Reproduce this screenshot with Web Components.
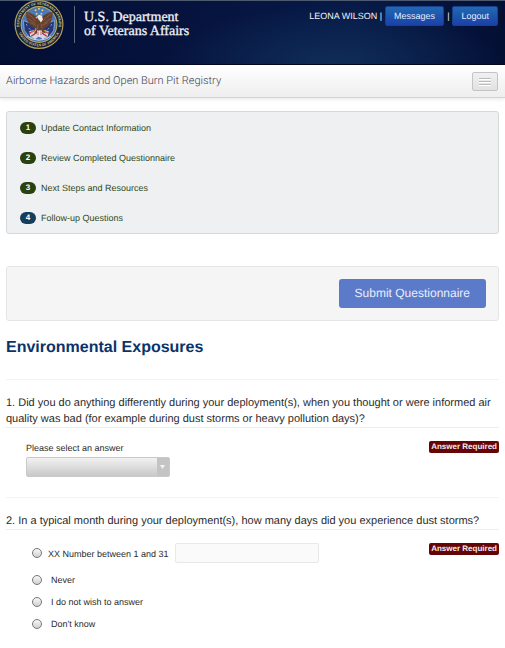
<!DOCTYPE html>
<html lang="en">
<head>
<meta charset="utf-8">
<meta name="viewport" content="width=device-width, initial-scale=1">
<title>Airborne Hazards and Open Burn Pit Registry</title>
<style>
  body {
    margin: 0;
    background: #fff;
    color: #2b2b2b;
    font: 10px/16px "Liberation Sans", Arial, sans-serif;
    text-rendering: geometricPrecision;
    --gutter: 6px;
    --line: #eeeeee;
  }
  main {
    padding: 0 var(--gutter);
  }
  h1 {
    margin: 16px 0 20px;
    color: #0a3469;
    font-size: 16px;
    line-height: 22px;
  }
</style>
</head>
<body>
<va-header user="LEONA WILSON"></va-header>
<va-navbar>Airborne Hazards and Open Burn Pit Registry</va-navbar>
<main>
  <step-list>
    <step-item number="1">Update Contact Information</step-item>
    <step-item number="2">Review Completed Questionnaire</step-item>
    <step-item number="3">Next Steps and Resources</step-item>
    <step-item number="4" current>Follow-up Questions</step-item>
  </step-list>
  <submit-bar>Submit Questionnaire</submit-bar>
  <h1>Environmental Exposures</h1>
  <survey-question>
    <span slot="title">1. Did you do anything differently during your deployment(s), when you thought or were informed air quality was bad (for example during dust storms or heavy pollution days)?</span>
    <answer-select>Please select an answer</answer-select>
  </survey-question>
  <survey-question>
    <span slot="title">2. In a typical month during your deployment(s), how many days did you experience dust storms?</span>
    <answer-options></answer-options>
  </survey-question>
</main>

<script>
class VaSeal extends HTMLElement {
  constructor() {
    super();
    this.attachShadow({ mode: 'open' });
    this.shadowRoot.innerHTML = `
      <style>
        :host { display: block; height: 49px; }
        svg { display: block; }
      </style>
      <svg width="50" height="49" viewBox="0 0 50 50" role="img" aria-label="Seal">
        <defs>
          <path id="upper" d="M5.4 30 A20.200 20.200 0 1 1 44.6 30"/>
          <path id="lower" d="M4.4 33 A22 22 0 0 0 45.6 33"/>
        </defs>
        <circle cx="25" cy="25" r="25" fill="#b3a05b"/>
        <circle cx="25" cy="25" r="23.8" fill="#17223b"/>
        <g fill="#d6c987" font-family="Liberation Sans, sans-serif" font-size="4" font-weight="bold">
          <text font-size="3.6"><textPath href="#upper" startOffset="50%" text-anchor="middle">DEPARTMENT OF VETERANS AFFAIRS</textPath></text>
          <text font-size="3.6"><textPath href="#lower" startOffset="50%" text-anchor="middle">UNITED STATES OF AMERICA</textPath></text>
        </g>
        <circle cx="25" cy="25" r="18.8" fill="#c4ad5c"/>
        <circle cx="25" cy="25" r="17.8" fill="#4a78b8"/>
        <!-- stars -->
        <g fill="#e6d35a">
          <circle cx="25" cy="9" r="1"/><circle cx="21.5" cy="10.4" r="1"/><circle cx="28.5" cy="10.4" r="1"/>
          <circle cx="22.6" cy="14" r="1"/><circle cx="27.4" cy="14" r="1"/>
        </g>
        <!-- flags -->
        <path d="M9 21l11 4 4 10-8 4-6-8z" fill="#243a78" stroke="#a9bddd" stroke-width=".7"/>
        <path d="M41 21l-11 4-4 10 8 4 6-8z" fill="#243a78" stroke="#a9bddd" stroke-width=".7"/>
        <path d="M15 32l7-2 3 7-4 3-5-3zM35 32l-7-2-3 7 4 3 5-3z" fill="#d9d5df"/>
        <path d="M15 34l6-3M17 37l6-4M35 34l-6-3M33 37l-6-4" stroke="#b63442" stroke-width="1.4"/>
        <path d="M12 25l1 1M15 29l1 1M38 25l-1 1M35 29l-1 1" stroke="#dce4f4"/>
        <!-- eagle -->
        <path d="M25 21c-2-4-7-8-13-9-1 7 2 13 8 16l3 1-3 5 4-1 2 3 2-3 4 1-2-5c6-2 9-9 9-17-6 1-11 4-14 9z" fill="#66402e"/>
        <path d="M13 14c4 2 6 4 8 8M14 19l7 5M16 23l6 3M38 14c-4 2-6 4-9 8M37 19l-7 5M34 23l-6 3M24 25l-1 5M27 24l1 5" fill="none" stroke="#8f6243" stroke-width=".8"/>
        <path d="M23 17l2-2 3 1 1 4-2 3-3-4z" fill="#eee9df"/>
        <path d="M23 17l-2 1 2 1z" fill="#deb844"/>
        <path d="M20 31l-3 3M30 31l4 2" stroke="#d2ae4f"/>
        <path d="M23 31h5v4l-3 3-2-3z" fill="#ece8e9"/>
        <path d="M24 32v4M27 32v4" stroke="#a93442" stroke-width=".8"/>
        <path d="M13 37q12 8 24 0" fill="none" stroke="#d2dced"/>
      </svg>
    `;
  }
}
customElements.define('va-seal', VaSeal);

class VaHeader extends HTMLElement {
  constructor() {
    super();
    this.attachShadow({ mode: 'open' });
    this.shadowRoot.innerHTML = `
      <style>
        :host { display: block; }
        header {
          display: flex;
          align-items: flex-start;
          justify-content: space-between;
          box-sizing: border-box;
          min-height: 65px;
          padding: 0 7px 0 14px;
          color: #f0f2f7;
          background:
            linear-gradient(#4c596e, #4c596e) top / 100% 1px no-repeat,
            radial-gradient(ellipse 170px 60px at 66% 100%, #0f2d57, transparent),
            linear-gradient(90deg, #030e33, #061440 45%, #071a48 70%, #040f34);
          border-bottom: 1px solid #020a26;
        }
        .brand { display: flex; }
        .name {
          box-sizing: border-box;
          height: 37px;
          margin: 6px 0 0 10px;
          padding: 5px 0 0 9px;
          border-left: 1px solid #5f6980;
          font: 14px/14px "Liberation Serif", serif;
          -webkit-text-stroke: 0.3px;
        }
        nav {
          display: flex;
          align-items: center;
          gap: 3px;
          padding-top: 6px;
          font-size: 9px;
        }
        button {
          height: 20px;
          padding: 0 8px;
          color: #e3edfa;
          font: inherit;
          line-height: 18px;
          text-rendering: inherit;
          background: linear-gradient(#2169b1, #1a41a9);
          border: 1px solid #17418d;
          border-radius: 2px;
        }
      </style>
      <header>
        <div class="brand">
          <va-seal></va-seal>
          <div class="name">U.S. Department<br>of Veterans Affairs</div>
        </div>
        <nav>
          <span><span class="user"></span> |</span>
          <button type="button">Messages</button>
          <span>|</span>
          <button type="button">Logout</button>
        </nav>
      </header>
    `;
    this.shadowRoot.querySelector('.user').textContent = this.getAttribute('user');
  }
}
customElements.define('va-header', VaHeader);

class VaNavbar extends HTMLElement {
  constructor() {
    super();
    this.attachShadow({ mode: 'open' });
    this.shadowRoot.innerHTML = `
      <style>
        :host {
          display: flex;
          align-items: center;
          justify-content: space-between;
          box-sizing: border-box;
          height: 33px;
          padding: 0 7px 0 var(--gutter);
          color: #3f4354;
          font-family: Roboto, "Liberation Sans", sans-serif;
          font-size: 11px;
          font-weight: 300;
          background: linear-gradient(#fff, #eee);
          border-bottom: 1px solid #d2d2d2;
          box-shadow: 0 1px 4px rgba(0,0,0,0.1);
        }
        button {
          display: flex;
          flex-direction: column;
          align-items: center;
          justify-content: center;
          gap: 2px;
          width: 26px;
          height: 19px;
          padding: 0;
          background: linear-gradient(#f0f0f0, #e2e2e2);
          border: 1px solid #c4c4c4;
          border-radius: 2px;
        }
        i { width: 12px; height: 1px; background: #bbb; box-shadow: 0 1px 0 #fff; }
      </style>
      <span><slot></slot></span>
      <button type="button" aria-label="Menu"><i></i><i></i><i></i></button>
    `;
  }
}
customElements.define('va-navbar', VaNavbar);

class StepList extends HTMLElement {
  constructor() {
    super();
    this.attachShadow({ mode: 'open' });
    this.shadowRoot.innerHTML = `
      <style>
        :host {
          display: flex;
          flex-direction: column;
          gap: 18px;
          margin-top: 13px;
          padding: 10px 13px 9px;
          background: #eff0f2;
          border: 1px solid #d5d9da;
          border-radius: 3px;
        }
      </style>
      <slot></slot>
    `;
  }
}
customElements.define('step-list', StepList);

class StepItem extends HTMLElement {
  constructor() {
    super();
    this.attachShadow({ mode: 'open' });
    this.shadowRoot.innerHTML = `
      <style>
        :host { display: block; --badge: #29400f; }
        :host([current]) { --badge: #143e5b; }
        a {
          display: flex;
          gap: 5px;
          color: #2f4a1b;
          font-size: 9px;
          line-height: 12px;
          text-decoration: none;
        }
        b {
          width: 16px;
          color: #fff;
          font-size: 8px;
          text-align: center;
          background: var(--badge);
          border-radius: 6px;
        }
      </style>
      <a href="#"><b></b><span><slot></slot></span></a>
    `;
    this.shadowRoot.querySelector('b').textContent = this.getAttribute('number');
  }
}
customElements.define('step-item', StepItem);

class SubmitBar extends HTMLElement {
  constructor() {
    super();
    this.attachShadow({ mode: 'open' });
    this.shadowRoot.innerHTML = `
      <style>
        :host {
          display: flex;
          justify-content: flex-end;
          margin-top: 32px;
          padding: 12px;
          background: #f5f5f5;
          border: 1px solid #e5e5e5;
          border-radius: 3px;
        }
        button {
          height: 29px;
          padding: 0 16px;
          color: #e9eefb;
          font: 12px/29px "Liberation Sans", Arial, sans-serif;
          text-rendering: inherit;
          background: #5b7ac9;
          border: 0;
          border-radius: 3px;
        }
      </style>
      <button type="submit"><slot></slot></button>
    `;
  }
}
customElements.define('submit-bar', SubmitBar);

class SurveyQuestion extends HTMLElement {
  constructor() {
    super();
    this.attachShadow({ mode: 'open' });
    this.shadowRoot.innerHTML = `
      <style>
        :host {
          display: block;
          margin-bottom: 20px;
          padding-top: 15px;
          border-top: 1px solid #f3f3f3;
        }
        h2 {
          margin: 0;
          font-size: 11px;
          font-weight: normal;
          line-height: 16px;
          border-bottom: 1px solid var(--line);
        }
        .body {
          display: flex;
          align-items: flex-start;
          justify-content: space-between;
          padding: 13px 0 0 20px;
        }
        .required {
          padding: 0 2px;
          color: #f6e9e9;
          font-size: 8px;
          font-weight: bold;
          line-height: 12px;
          background: #630507;
          border-radius: 2px;
        }
      </style>
      <h2><slot name="title"></slot></h2>
      <div class="body">
        <slot></slot>
        <span class="required">Answer Required</span>
      </div>
    `;
  }
}
customElements.define('survey-question', SurveyQuestion);

class AnswerSelect extends HTMLElement {
  constructor() {
    super();
    this.attachShadow({ mode: 'open' });
    this.shadowRoot.innerHTML = `
      <style>
        :host { display: block; font-size: 9px; }
        label { display: block; line-height: 14px; }
        .field { display: grid; width: 144px; margin-top: 2px; }
        select, svg { grid-area: 1 / 1; }
        select {
          appearance: none;
          height: 20px;
          background: linear-gradient(90deg, transparent 130px, #c4c4c4 130px), linear-gradient(#f2f2f2, #c8c8c8);
          border: 1px solid #c9c9c9;
          border-radius: 2px;
        }
        svg { justify-self: end; align-self: center; margin-right: 5px; pointer-events: none; }
      </style>
      <label for="answer"><slot></slot></label>
      <div class="field">
        <select id="answer"><option></option></select>
        <svg width="5" height="5" viewBox="0 0 5 5"><path d="M0 0h5L2.500 4z" fill="#f4f4f4"/></svg>
      </div>
    `;
  }
}
customElements.define('answer-select', AnswerSelect);

class AnswerOptions extends HTMLElement {
  constructor() {
    super();
    this.attachShadow({ mode: 'open' });
    this.shadowRoot.innerHTML = `
      <style>
        :host { display: grid; gap: 8px; padding-left: 6px; font-size: 9px; line-height: 14px; }
        div { display: flex; align-items: center; gap: 9px; }
        .number { gap: 6px; height: 20px; margin-bottom: 2px; }
        .number label { padding-top: 2px; }
        input[type="radio"] {
          appearance: none;
          width: 10px;
          height: 10px;
          margin: 0;
          background: linear-gradient(#f8f8f8, #d0d0d0);
          border: 1px solid #777;
          border-radius: 50%;
        }
        input[type="text"] {
          box-sizing: border-box;
          width: 144px;
          height: 20px;
          background: #fafafa;
          border: 1px solid #e8e8e8;
          border-radius: 2px;
        }
      </style>
      <div class="number">
        <input type="radio" name="days" id="number">
        <label id="number-label" for="number">XX Number between 1 and 31</label>
        <input type="text" aria-labelledby="number-label">
      </div>
      <div><input type="radio" name="days" id="never"><label for="never">Never</label></div>
      <div><input type="radio" name="days" id="decline"><label for="decline">I do not wish to answer</label></div>
      <div><input type="radio" name="days" id="unknown"><label for="unknown">Don't know</label></div>
    `;
  }
}
customElements.define('answer-options', AnswerOptions);
</script>
</body>
</html>
